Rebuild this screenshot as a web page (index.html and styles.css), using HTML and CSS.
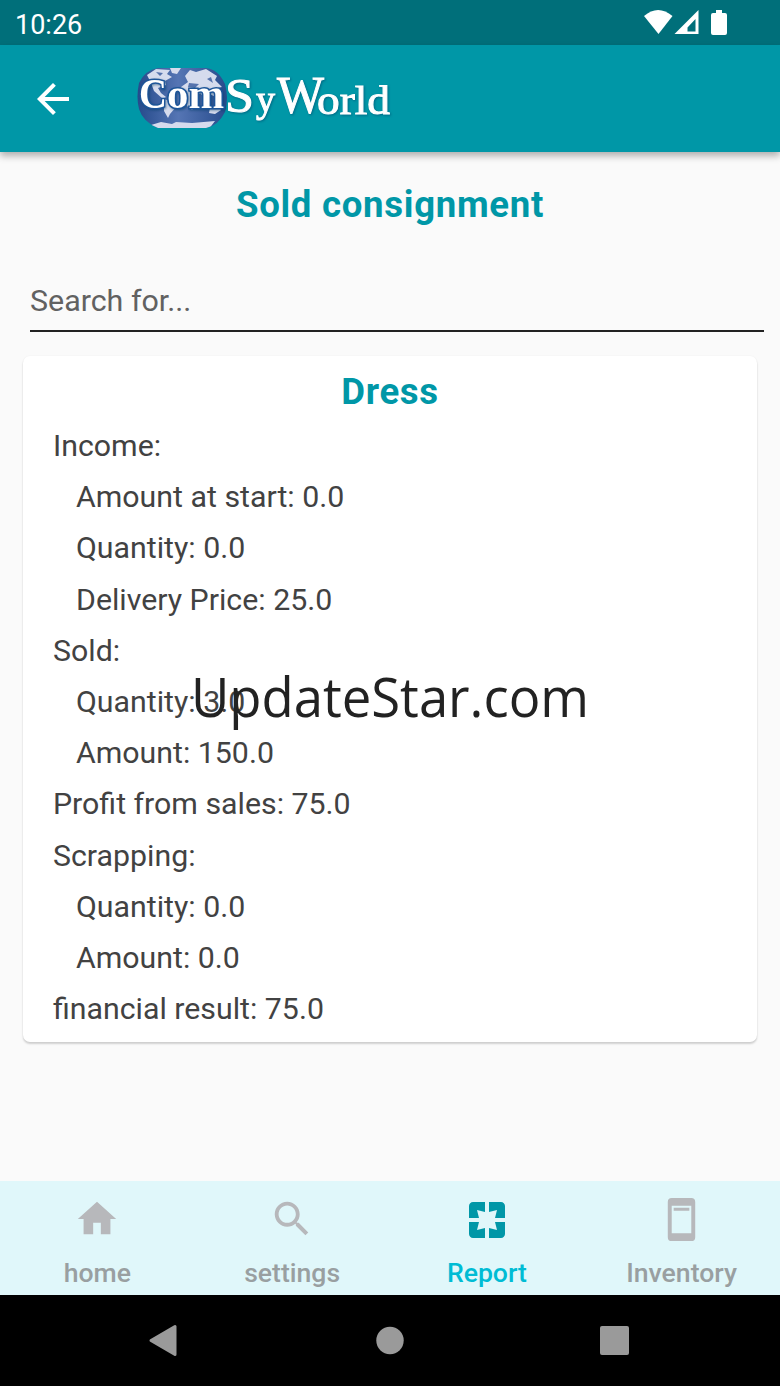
FILE: index.html
```html
<!DOCTYPE html>
<html lang="en">
<head>
<meta charset="utf-8">
<title>Sold consignment</title>
<link rel="stylesheet" href="styles.css">
</head>
<body>
<div class="screen">
  <div class="status">
    <span class="clock">10:26</span>
    <svg class="status-icons" width="84" height="26" viewBox="0 0 84 26" fill="#fff">
      <path d="M0 6Q14-6 28.500 6L14.500 24z"/>
      <path fill-rule="evenodd" d="M30.500 24L54.500 0V24zM43.500 21.500H51.500V9L43.500 17.500z"/>
      <path d="M71.500 3H76V0H82V3H85Q87 3 87 5V23Q87 25 85 25H73Q71 25 71 23V5Q71 3 73 3z" transform="translate(-4 0)"/>
    </svg>
  </div>
  <header class="appbar">
    <svg class="back" width="32" height="32" viewBox="4 4 16 16" fill="#fff"><path d="M20 11H7.830l5.590-5.590L12 4l-8 8 8 8 1.410-1.410L7.830 13H20v-2z"/></svg>
    <svg class="logo" width="264" height="70" viewBox="0 0 264 70">
      <defs>
        <linearGradient id="sea" x1="0" x2="1"><stop offset="0" stop-color="#24498a"/><stop offset=".45" stop-color="#5575b4"/><stop offset="1" stop-color="#24498a"/></linearGradient>
        <clipPath id="globe"><path d="M20 4H68Q80 5 87 20Q91 34 87 48Q80 62 68 64H20Q5 58 1 45Q-2 33 1 19Q7 6 20 4z"/></clipPath>
      </defs>
      <g clip-path="url(#globe)">
        <path fill="url(#sea)" d="M-2 0H92V68H-2z"/>
        <g fill="#d5dbed">
          <path d="M9 11L18 5 32 6 29 10 34 13 27 17 28 21 20 24 23 29 28 33 25 35 16 27 13 19z"/>
          <path d="M32 4H43L39 10 34 9z"/>
          <path d="M26 35L35 38 38 43 32 50 30 54 26 47z"/>
          <path d="M47 12L52 6 58 8 68 5 79 12 77 16 84 23 79 24 76 32 71 30 68 35 62 29 58 34 61 39 54 46 49 42 46 34 41 32 43 23 50 18z"/>
          <path d="M72 44L80 41 83 46 77 50 71 49z"/>
          <path d="M13 61L23 58 34 60 38 58 54 59 77 57 70 66H18z"/>
        </g>
        <g fill="#5673ad"><path d="M51 19L61 20 57 24 50 23zM18 8L25 9 22 12zM69 15L73 13 75 19z"/></g>
      </g>
      <g class="wordmark">
        <text class="com" x="1" y="44" font-size="43" textLength="28" lengthAdjust="spacingAndGlyphs">C</text>
        <text class="com" x="29" y="44" font-size="41" textLength="57" lengthAdjust="spacingAndGlyphs">om</text>
        <text x="87" y="48" font-size="49" textLength="29" lengthAdjust="spacingAndGlyphs">S</text>
        <text x="118" y="48" font-size="37" textLength="19" lengthAdjust="spacingAndGlyphs">y</text>
        <text x="139" y="48.500" font-size="52" textLength="47" lengthAdjust="spacingAndGlyphs">W</text>
        <text x="179" y="49.500" font-size="41" textLength="73" lengthAdjust="spacingAndGlyphs">orld</text>
      </g>
    </svg>
  </header>
  <main class="content">
    <h1 class="title">Sold consignment</h1>
    <div class="search">Search for...</div>
    <section class="card">
      <h2 class="card-title">Dress</h2>
      <ul class="rows">
        <li>Income:</li>
        <li class="sub">Amount at start: 0.0</li>
        <li class="sub">Quantity: 0.0</li>
        <li class="sub">Delivery Price: 25.0</li>
        <li>Sold:</li>
        <li class="sub">Quantity: 3.0</li>
        <li class="sub">Amount: 150.0</li>
        <li>Profit from sales: 75.0</li>
        <li>Scrapping:</li>
        <li class="sub">Quantity: 0.0</li>
        <li class="sub">Amount: 0.0</li>
        <li>financial result: 75.0</li>
      </ul>
    </section>
  </main>
  <nav class="tabs">
    <div class="tab"><svg width="46" height="46" viewBox="0 0 24 24"><path d="M10 20v-6h4v6h5v-8h3L12 3 2 12h3v8z"/></svg><span>home</span></div>
    <div class="tab"><svg width="46" height="46" viewBox="0 0 24 24"><path d="M15.500 14h-.790l-.280-.270C15.410 12.590 16 11.110 16 9.500 16 5.910 13.090 3 9.500 3S3 5.910 3 9.500 5.910 16 9.500 16c1.610 0 3.090-.590 4.230-1.570l.270.280v.790l5 4.990L20.490 19l-4.990-5zm-6 0C7.010 14 5 11.990 5 9.500S7.010 5 9.500 5 14 7.010 14 9.500 11.990 14 9.500 14z"/></svg><span>settings</span></div>
    <div class="tab active"><svg width="48" height="48" viewBox="0 0 24 24"><path d="M3 5v6h5L7 7l4 1V3H5c-1.100 0-2 .9-2 2zm5 8H3v6c0 1.100.9 2 2 2h6v-5l-4 1 1-4zm9 4l-4-1v5h6c1.100 0 2-.9 2-2v-6h-5l1 4zm2-14h-6v5l4-1-1 4h5V5c0-1.100-.9-2-2-2z"/></svg><span>Report</span></div>
    <div class="tab"><svg width="47" height="47" viewBox="0 0 24 24"><path fill-rule="evenodd" d="M7 1H17Q19 1 19 3V21Q19 23 17 23H7Q5 23 5 21V3Q5 1 7 1zM7 5V19H17V5zM8 6H16V7.500H8z"/></svg><span>Inventory</span></div>
  </nav>
  <div class="sysnav">
    <svg width="780" height="91" viewBox="0 0 780 91" fill="#9a9a9a">
      <path d="M151 45.500L175 31.500V59.500z" stroke="#9a9a9a" stroke-width="3" stroke-linejoin="round"/>
      <circle cx="390" cy="45.500" r="13.700"/>
      <rect x="600" y="31" width="29" height="29" rx="2"/>
    </svg>
  </div>
  <svg class="watermark" width="420" height="80" viewBox="0 0 420 80"><text x="11" y="56.500" font-size="55" textLength="398" lengthAdjust="spacingAndGlyphs">UpdateStar.com</text></svg>
</div>
</body>
</html>
```
FILE: styles.css
```css
* { box-sizing: border-box; }
body { margin: 0; font-family: Roboto, "Noto Sans", sans-serif; }
.screen { position: relative; width: 780px; height: 1386px; display: flex; flex-direction: column; background: #fafafa; overflow: hidden; }
.status { height: 45px; flex: none; background: #006f7a; color: #fff; display: flex; justify-content: space-between; align-items: flex-start; padding: 10px 52px 0 15px; }
.clock { font-size: 27px; line-height: 30px; }
.status-icons { display: block; }
.appbar { height: 107px; flex: none; background: #0097a7; display: flex; align-items: center; padding-left: 37px; box-shadow: 0 4px 7px rgba(0,0,0,.3); }
.logo { margin-left: 69px; overflow: visible; }
.wordmark { font-family: "Liberation Serif", serif; fill: #fff; filter: drop-shadow(1px 1px 1px rgba(0,60,100,.5)); stroke: #fff; stroke-width: 1px; }
.wordmark .com { font-weight: bold; stroke: #1d5599; stroke-width: 3px; paint-order: stroke; }
.content { flex: 1; padding: 30px 23px 0; }
.title { margin: 0; font-size: 36.600px; letter-spacing: .7px; line-height: 46px; font-weight: 700; text-align: center; color: #0097a7; }
.search { margin: 43px -7px 0 7px; height: 61px; padding-top: 12px; font-size: 30.4px; line-height: 36px; color: #616161; border-bottom: 2px solid #222; }
.card { margin-top: 24px; height: 686px; padding: 13px 30px; background: #fff; border-radius: 7px; box-shadow: 0 2px 2px rgba(0,0,0,.17), 0 0 2px rgba(0,0,0,.05); }
.card-title { margin: 0; font-size: 36.600px; letter-spacing: .7px; line-height: 46px; text-align: center; color: #0097a7; }
.rows { list-style: none; margin: 5px 0 0; padding: 0; font-size: 30.3px; line-height: 51.200px; color: #424242; }
.sub { padding-left: 23px; }
.tabs { height: 114px; flex: none; background: #e0f7fa; display: flex; color: #999fa1; padding-right: 1px; }
.tab { flex: 1; display: flex; flex-direction: column; align-items: center; justify-content: space-between; padding: 15px 0 6px; font-size: 26.600px; line-height: 32px; font-weight: 500; }
.tab svg { fill: #b7b8bb; }
.active { color: #00bcd4; }
.active svg { fill: #0097a7; }
.sysnav { height: 91px; flex: none; background: #000; }
.watermark { position: absolute; left: 180px; top: 660px; font-family: "Open Sans", "Noto Sans", sans-serif; fill: #222; }
```
